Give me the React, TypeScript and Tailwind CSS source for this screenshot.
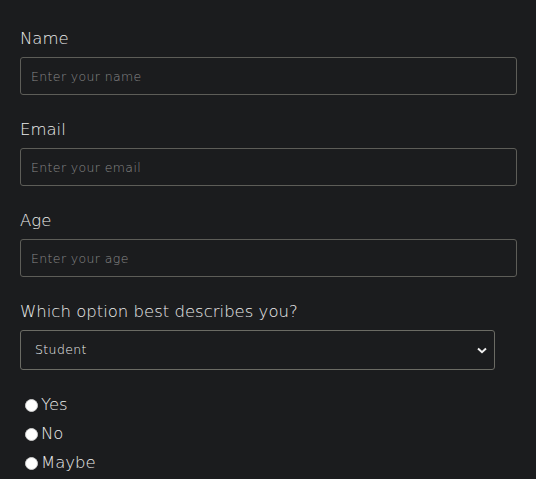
import { useState } from 'react';

const fieldClass =
  'block h-[38px] w-full rounded-[3px] border border-[#5d5d58] bg-[#1b1c1e] px-[10px] text-[12.5px] font-extralight tracking-[0.03em] text-[#d8d8d8] outline-none placeholder:text-[#8a8a8a]';

function Field({ id, label, placeholder }: { id: string; label: string; placeholder: string }) {
  return (
    <div className="mb-[21px]">
      <label htmlFor={id} className="mb-[6px] block pt-[2px] text-[16.5px] font-extralight leading-[24px] text-[#ececec]">
        {label}
      </label>
      <input id={id} type="text" placeholder={placeholder} className={fieldClass} />
    </div>
  );
}

export default function App() {
  const [role, setRole] = useState('student');
  const [answer, setAnswer] = useState('');

  return (
    <div className="min-h-[479px] bg-[#1b1c1e] px-5 pt-[25px] font-['DejaVu_Sans',sans-serif] text-[#ececec]">
      <form className="w-[497px]" onSubmit={(e) => e.preventDefault()}>
        <Field id="name" label="Name" placeholder="Enter your name" />
        <Field id="email" label="Email" placeholder="Enter your email" />
        <Field id="age" label="Age" placeholder="Enter your age" />

        <div className="mb-[21px]">
          <label htmlFor="role" className="mb-[6px] block pt-[2px] text-[16.5px] font-extralight leading-[24px]">
            Which option best describes you?
          </label>
          <div className="relative w-[475px]">
            <select
              id="role"
              value={role}
              onChange={(e) => setRole(e.target.value)}
              className="block h-10 w-full appearance-none rounded-[3px] border border-[#6b6b64] bg-[#1b1c1e] pl-[14px] text-[12.5px] font-extralight tracking-[0.03em] text-[#ececec] outline-none"
            >
              <option value="student">Student</option>
              <option value="professional">Professional</option>
              <option value="other">Other</option>
            </select>
            <svg
              viewBox="0 0 12 12"
              className="pointer-events-none absolute right-[7px] top-1/2 h-3 w-3 -translate-y-1/2"
            >
              <path d="M2 4.5 6 8.2 10 4.5" fill="none" stroke="#f0f0f0" strokeWidth="2" />
            </svg>
          </div>
        </div>

        <div className="pl-[5px]">
          {['Yes', 'No', 'Maybe'].map((opt) => (
            <label key={opt} className="flex h-[29px] items-center text-[16.5px] font-extralight">
              <input
                type="radio"
                name="answer"
                value={opt}
                checked={answer === opt}
                onChange={() => setAnswer(opt)}
                className="mr-[3px] h-[13px] w-[13px] appearance-none rounded-full border border-[#cfcfcf] bg-white checked:border-[3px] checked:border-[#1a73e8]"
              />
              {opt}
            </label>
          ))}
        </div>
      </form>
    </div>
  );
}
